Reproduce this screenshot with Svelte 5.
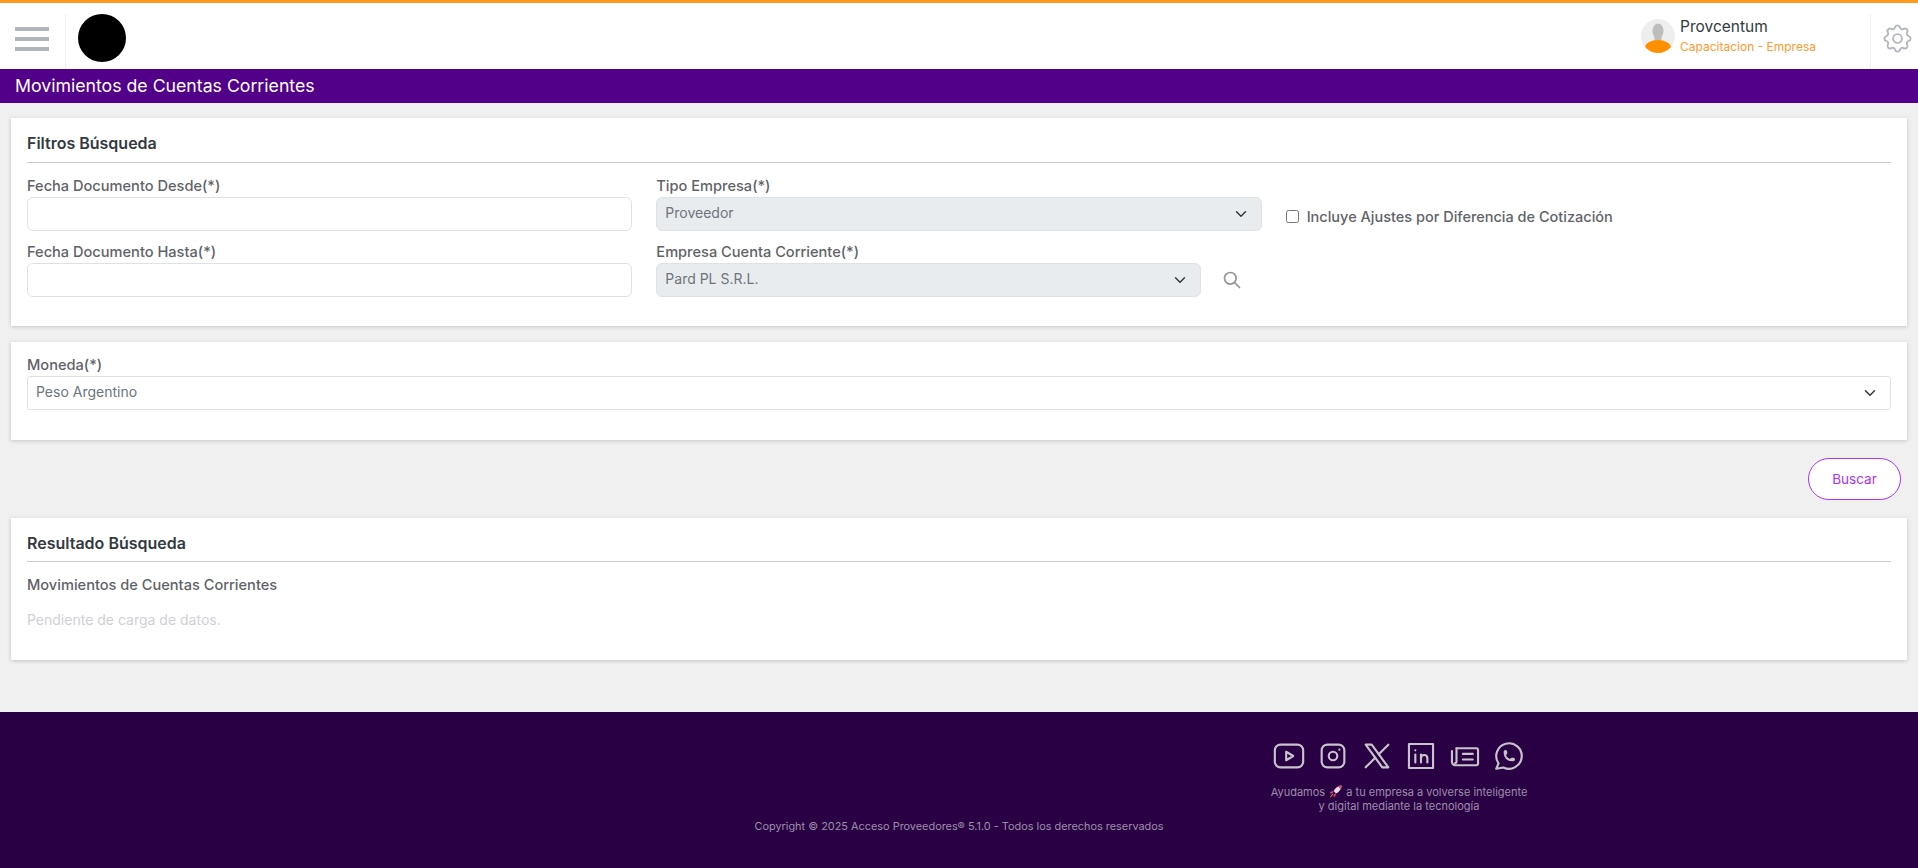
<script lang="ts">
  const socials = [
    { name: 'YouTube', paths: ['M2 8a4 4 0 0 1 4 -4h12a4 4 0 0 1 4 4v8a4 4 0 0 1 -4 4h-12a4 4 0 0 1 -4 -4v-8z', 'M10 9l5 3l-5 3z'] },
    { name: 'Instagram', paths: ['M4 8a4 4 0 0 1 4 -4h8a4 4 0 0 1 4 4v8a4 4 0 0 1 -4 4h-8a4 4 0 0 1 -4 -4z', 'M9 12a3 3 0 1 0 6 0a3 3 0 0 0 -6 0', 'M16.5 7.5v.01'] },
    { name: 'X', paths: ['M4 4l11.733 16h4.267l-11.733 -16z', 'M4 20l6.768 -6.768m2.46 -2.46l6.772 -6.772'] },
    { name: 'LinkedIn', paths: ['M3.5 3.5h17v17h-17z', 'M8 11v5.5', 'M8 8v.01', 'M12 16.5v-5.5', 'M16.5 16.5v-3a2.2 2.2 0 0 0 -4.5 0'] },
    { name: 'Noticias', paths: ['M6 6.5h14a1.2 1.2 0 0 1 1.2 1.2v9.6a1.2 1.2 0 0 1 -1.2 1.2h-15a2.2 2.2 0 0 1 -2.2 -2.2v-7.8', 'M6 6.5v9.5a1 1 0 0 1 -1 1', 'M10.5 10.5h7', 'M10.5 14.5h7'] },
    { name: 'WhatsApp', paths: ['M3 21l1.65 -3.8a9 9 0 1 1 3.4 2.9l-5.05 .9', 'M9 10a.5 .5 0 0 0 1 0v-1a.5 .5 0 0 0 -1 0v1a5 5 0 0 0 5 5h1a.5 .5 0 0 0 0 -1h-1a.5 .5 0 0 0 0 1'] }
  ];
</script>

<div class="page">
  <header class="topbar">
    <button class="burger" aria-label="Menu">
      <span></span><span></span><span></span>
    </button>
    <div class="logo-cell"><div class="logo"></div></div>
    <div class="user">
      <svg class="avatar" viewBox="0 0 34 34" width="34" height="34">
        <defs><clipPath id="av"><circle cx="17" cy="17" r="17" /></clipPath></defs>
        <circle cx="17" cy="17" r="17" fill="#eeeeee" />
        <g clip-path="url(#av)">
          <ellipse cx="17" cy="12" rx="5.5" ry="7.5" fill="#bdbdbd" />
          <rect x="13.5" y="17" width="7" height="5" fill="#bdbdbd" />
          <ellipse cx="17" cy="29" rx="13" ry="8" fill="#ff9000" />
        </g>
      </svg>
      <div class="user-text">
        <div class="user-name">Provcentum</div>
        <div class="user-role">Capacitacion - Empresa</div>
      </div>
    </div>
    <div class="gear-cell">
      <svg viewBox="0 0 24 24" width="35" height="35" fill="none" stroke="#b4b8bc" stroke-width="1.3">
        <path d="M10.325 4.317c.426 -1.756 2.924 -1.756 3.35 0a1.724 1.724 0 0 0 2.573 1.066c1.543 -.94 3.31 .826 2.37 2.37a1.724 1.724 0 0 0 1.065 2.572c1.756 .426 1.756 2.924 0 3.35a1.724 1.724 0 0 0 -1.066 2.573c.94 1.543 -.826 3.31 -2.37 2.37a1.724 1.724 0 0 0 -2.572 1.065c-.426 1.756 -2.924 1.756 -3.35 0a1.724 1.724 0 0 0 -2.573 -1.066c-1.543 .94 -3.31 -.826 -2.37 -2.37a1.724 1.724 0 0 0 -1.065 -2.572c-1.756 -.426 -1.756 -2.924 0 -3.35a1.724 1.724 0 0 0 1.066 -2.573c-.94 -1.543 .826 -3.31 2.37 -2.37c1 .608 2.296 .07 2.572 -1.065z" />
        <path d="M9 12a3 3 0 1 0 6 0a3 3 0 0 0 -6 0" />
      </svg>
    </div>
  </header>

  <div class="page-title">Movimientos de Cuentas Corrientes</div>

  <main class="content">
    <section class="card filters">
      <h2>Filtros Búsqueda</h2>
      <div class="form-grid">
        <div class="field">
          <label for="desde">Fecha Documento Desde(*)</label>
          <input id="desde" type="text" />
        </div>
        <div class="field">
          <label for="tipo">Tipo Empresa(*)</label>
          <select id="tipo" disabled><option>Proveedor</option></select>
        </div>
        <label class="check">
          <input type="checkbox" />
          <span>Incluye Ajustes por Diferencia de Cotización</span>
        </label>
        <div class="field">
          <label for="hasta">Fecha Documento Hasta(*)</label>
          <input id="hasta" type="text" />
        </div>
        <div class="field">
          <label for="empresa">Empresa Cuenta Corriente(*)</label>
          <div class="with-search">
            <select id="empresa" disabled><option>Pard PL S.R.L.</option></select>
            <svg viewBox="0 0 24 24" width="20" height="20" fill="none" stroke="#8f9499" stroke-width="2" stroke-linecap="round">
              <circle cx="10" cy="10" r="7" />
              <path d="M21 21l-6 -6" />
            </svg>
          </div>
        </div>
      </div>
    </section>

    <section class="card currency">
      <div class="field">
        <label for="moneda">Moneda(*)</label>
        <select id="moneda" class="square"><option>Peso Argentino</option></select>
      </div>
    </section>

    <div class="actions">
      <button class="search-btn">Buscar</button>
    </div>

    <section class="card results">
      <h2>Resultado Búsqueda</h2>
      <h3>Movimientos de Cuentas Corrientes</h3>
      <p>Pendiente de carga de datos.</p>
    </section>
  </main>

  <footer class="footer">
    <div class="social-block">
      <div class="socials">
        {#each socials as s}
          <svg viewBox="0 0 24 24" width="34" height="34" fill="none" stroke="#c9c4cc" stroke-width="1.5" stroke-linecap="round" stroke-linejoin="round" aria-label={s.name}>
            {#each s.paths as d}
              <path {d} />
            {/each}
          </svg>
        {/each}
      </div>
      <p class="tagline">
        Ayudamos
        <svg class="rocket" viewBox="0 0 16 16" width="15" height="15">
          <path d="M14.5 1.5c-4 .2-7 2.5-8.5 6l2.5 2.5c3.5-1.5 5.8-4.5 6-8.5z" fill="#e9dbe6" />
          <path d="M14.5 1.5c-1.5 .1-2.8 .4-4 1l3 3c.6-1.2 .9-2.5 1-4z" fill="#e5487a" />
          <path d="M6 7.5l-3 .5-1 2 3-.2zM8.5 10l-.5 3-2 1 .2-3z" fill="#d9466f" />
          <path d="M4.5 10.5l1 1-3 3-.5-.5z" fill="#f08a24" />
        </svg>
        a tu empresa a volverse inteligente<br />y digital mediante la tecnología
      </p>
    </div>
    <p class="copyright">Copyright © 2025 Acceso Proveedores® 5.1.0 - Todos los derechos reservados</p>
  </footer>
</div>

<style>
  :global(body) {
    margin: 0;
    background: #f0f0f0;
  }

  .page {
    font-family: 'Inter', 'Liberation Sans', sans-serif;
    color: #495057;
    height: 868px;
    display: flex;
    flex-direction: column;
  }

  .topbar {
    height: 66px;
    background: #fff;
    border-top: 3px solid #ff9a1f;
    display: flex;
    align-items: stretch;
  }

  .burger {
    width: 66px;
    padding: 13px 0 0 15px;
    margin-top: 11px;
    border: 0;
    border-right: 1px solid #eeeeee;
    background: none;
    display: flex;
    flex-direction: column;
    justify-content: flex-start;
    gap: 6px;
  }

  .burger span {
    width: 34px;
    height: 4px;
    background: #b0b5b9;
  }

  .logo-cell {
    padding: 11px 0 0 12px;
    flex: 1;
  }

  .logo {
    width: 48px;
    height: 48px;
    border-radius: 50%;
    background: #000;
  }

  .user {
    display: flex;
    gap: 5px;
    align-items: flex-start;
    width: 229px;
    padding-top: 16px;
  }

  .avatar {
    flex: none;
  }

  .user-name {
    font-size: 15.5px;
    line-height: 20px;
    margin-top: -2px;
    color: #343a40;
  }

  .user-role {
    font-size: 12px;
    line-height: 16px;
    margin-top: 2px;
    color: #ff9a30;
    white-space: nowrap;
  }

  .gear-cell {
    width: 48px;
    margin-top: 11px;
    border-left: 1px solid #eeeeee;
    display: flex;
    justify-content: center;
    padding: 7px 0 0 6px;
    box-sizing: border-box;
  }

  .page-title {
    height: 34px;
    background: #52008a;
    color: #fff;
    font-size: 17.7px;
    line-height: 34px;
    padding-left: 15px;
  }

  .content {
    flex: 1;
    padding: 15px 11px 0;
  }

  .card {
    background: #fff;
    box-shadow: 0 1px 4px rgba(0, 0, 0, 0.18);
    padding: 0 16px;
  }

  h2 {
    margin: 0;
    height: 44px;
    line-height: 51px;
    font-size: 16px;
    font-weight: 600;
    color: #343a40;
    border-bottom: 1px solid #ccc;
  }

  .filters {
    height: 208px;
    box-sizing: border-box;
  }

  .form-grid {
    display: grid;
    grid-template-columns: repeat(3, 1fr);
    column-gap: 24px;
    row-gap: 10px;
    padding-top: 12px;
  }

  .field {
    display: flex;
    flex-direction: column;
  }

  .field label {
    font-size: 14.6px;
    line-height: 22px;
    font-weight: 500;
    color: #5f6368;
  }

  input[type='text'],
  select {
    width: 100%;
    height: 34px;
    box-sizing: border-box;
    border: 1px solid #dee2e6;
    border-radius: 6px;
    background-color: #fff;
    font: inherit;
    font-size: 14px;
    color: #6c757d;
    padding: 0 8px 4px;
    opacity: 1;
  }

  select {
    appearance: none;
    background-image: url("data:image/svg+xml,%3csvg xmlns='http://www.w3.org/2000/svg' viewBox='0 0 16 16'%3e%3cpath fill='none' stroke='%23343a40' stroke-linecap='round' stroke-linejoin='round' stroke-width='2' d='m2 5 6 6 6-6'/%3e%3c/svg%3e");
    background-repeat: no-repeat;
    background-position: right 12px center;
    background-size: 16px 12px;
  }

  select:disabled {
    background-color: #e9ecef;
  }

  select.square {
    border-radius: 3px;
  }

  .check {
    display: flex;
    align-items: center;
    gap: 8px;
    font-size: 14.5px;
    font-weight: 500;
    color: #5f6368;
    padding-top: 26px;
    height: 56px;
    box-sizing: border-box;
  }

  .check input {
    width: 13px;
    height: 13px;
    margin: 0;
  }

  .with-search {
    display: flex;
    align-items: center;
    gap: 21px;
    width: 600px;
  }

  .with-search select {
    width: 545px;
    flex: none;
  }

  .currency {
    margin-top: 16px;
    height: 98px;
    padding-top: 12px;
    box-sizing: border-box;
  }

  .actions {
    display: flex;
    justify-content: flex-end;
    padding: 18px 6px 18px 0;
  }

  .search-btn {
    width: 93px;
    height: 42px;
    border: 1px solid #a933ff;
    border-radius: 21px;
    background: #fff;
    color: #a933ff;
    font: inherit;
    font-size: 13.5px;
  }

  .results {
    height: 142px;
    box-sizing: border-box;
  }

  .results h2 {
    height: 43px;
  }

  h3 {
    margin: 12px 0 0;
    font-size: 14.6px;
    line-height: 22px;
    font-weight: 500;
    color: #5f6368;
  }

  .results p {
    margin: 14px 0 0;
    font-size: 14px;
    line-height: 20px;
    color: #d0d0d4;
  }

  .footer {
    height: 156px;
    background: #2a0045;
    box-sizing: border-box;
    padding-top: 27px;
  }

  .social-block {
    width: 300px;
    margin-left: 1249px;
    text-align: center;
  }

  .socials {
    display: flex;
    justify-content: center;
    gap: 10px;
  }

  .tagline {
    margin: 11px 0 0;
    font-size: 11px;
    line-height: 14px;
    color: #9c8fa8;
  }

  .rocket {
    vertical-align: -3px;
  }

  .copyright {
    margin: 6px 0 0;
    text-align: center;
    font-size: 10.9px;
    line-height: 14px;
    color: #9c8fa8;
  }
</style>
